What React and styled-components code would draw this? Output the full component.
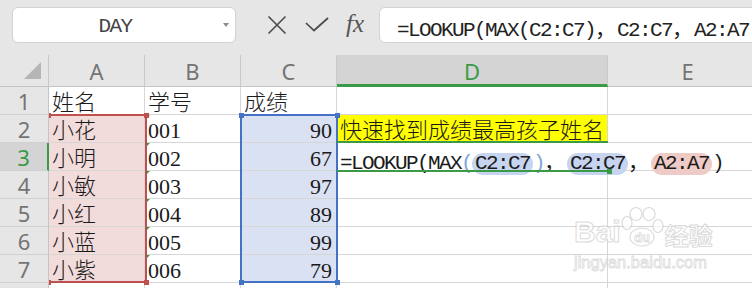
import styled, { createGlobalStyle } from "styled-components";

const GlobalStyle = createGlobalStyle`
  html, body {
    margin: 0;
    padding: 0;
    background: #fff;
    overflow: hidden;
  }
`;

const green = "#3a9a45";
const serif = `"Liberation Serif", "Noto Sans CJK SC", serif`;
const mono = `"Liberation Mono", "Courier New", "DejaVu Sans Mono", monospace`;

const Window = styled.div`
  position: relative;
  width: 752px;
  height: 288px;
  overflow: hidden;
  background: #fff;
`;

const Toolbar = styled.div`
  display: flex;
  align-items: flex-start;
  height: 55px;
  padding-top: 7px;
  box-sizing: border-box;
  background: #e6e6e6;
`;

const NameBox = styled.div`
  display: flex;
  align-items: flex-start;
  flex: none;
  margin-left: 12px;
  width: 224px;
  height: 36px;
  box-sizing: border-box;
  background: #fff;
  border: 1px solid #d3d3d3;
  border-radius: 6px;
`;

const NameText = styled.div`
  flex: 1;
  text-align: center;
  padding-top: 4px;
  line-height: 30px;
  font-family: ${mono};
  font-size: 21px;
  letter-spacing: -1.6px;
  color: #444;
`;

const DropArrow = styled.div`
  flex: none;
  width: 0;
  height: 0;
  margin: 15px 6px 0 6px;
  border-left: 3.5px solid transparent;
  border-right: 3.5px solid transparent;
  border-top: 4px solid #8c8c8c;
`;

const IconRow = styled.div`
  display: flex;
  flex: none;
  margin-left: 21px;
`;

const IconSlot = styled.div`
  display: flex;
  align-items: center;
  justify-content: center;
  width: 40px;
  height: 36px;
  color: #4a4a4a;
`;

const FxText = styled.span`
  font-family: "Liberation Serif", serif;
  font-style: italic;
  font-size: 25px;
  color: #555;
  margin-right: 4px;
  margin-top: -2px;
`;

const FormulaBox = styled.div`
  flex: none;
  margin-left: 2px;
  width: 420px;
  height: 36px;
  box-sizing: border-box;
  padding: 4px 0 0 17px;
  background: #fff;
  border: 1px solid #d3d3d3;
  border-radius: 6px;
  line-height: 30px;
  white-space: nowrap;
  font-family: ${mono};
  font-size: 21px;
  letter-spacing: -1.6px;
  color: #222;
`;

const FullComma = styled.span`
  display: inline-block;
  width: ${(p) => p.$w || 22}px;
  letter-spacing: 0;
  font-family: "Noto Sans CJK SC", sans-serif;
`;

const columns = "49px 96px 96px 96px 271px 160px";
const rowsTpl = "32px repeat(8, 28px)";

const Sheet = styled.div`
  position: relative;
  display: grid;
  grid-template-columns: ${columns};
  grid-template-rows: ${rowsTpl};
`;

const Corner = styled.div`
  display: flex;
  align-items: flex-end;
  justify-content: flex-end;
  padding: 0 7px 7px 0;
  box-sizing: border-box;
  background: #e6e6e6;
  border-right: 1px solid #c9c9c9;
  border-bottom: 1px solid #c4c4c4;
`;

const ColHead = styled.div`
  display: flex;
  align-items: center;
  justify-content: center;
  box-sizing: border-box;
  background: ${(p) => (p.$active ? "#d4d4d4" : "#e6e6e6")};
  border-right: 1px solid #c9c9c9;
  border-bottom: ${(p) => (p.$active ? `3px solid ${green}` : "1px solid #c4c4c4")};
  padding-top: ${(p) => (p.$active ? "2px" : "0")};
  font-family: "Noto Sans", sans-serif;
  font-size: 22px;
  color: ${(p) => (p.$active ? green : "#747474")};
`;

const RowHead = styled.div`
  position: relative;
  z-index: 3;
  display: flex;
  align-items: center;
  justify-content: center;
  box-sizing: border-box;
  background: ${(p) => (p.$active ? "#d4d4d4" : "#e6e6e6")};
  border-right: ${(p) => (p.$active ? `2px solid ${green}` : "1px solid #c4c4c4")};
  border-bottom: 1px solid #d0d0d0;
  font-family: "Noto Sans", sans-serif;
  font-size: 22px;
  color: ${(p) => (p.$active ? green : "#747474")};
`;

const toneBg = {
  red: "#f2dcdb",
  blue: "#dae1f3",
  yellow: "#ffff00",
};

const Cell = styled.div`
  position: relative;
  box-sizing: border-box;
  padding: 4px 4px 0 3px;
  line-height: 24px;
  white-space: nowrap;
  text-align: ${(p) => (p.$right ? "right" : "left")};
  background: ${(p) => toneBg[p.$tone] || "transparent"};
  border-right: ${(p) => (p.$open ? "none" : "1px solid #d6d6d6")};
  border-bottom: 1px solid #d6d6d6;
  font-family: ${serif};
  font-size: 22px;
  font-weight: 300;
  color: #1a1a1a;
  z-index: ${(p) => (p.$open ? 1 : "auto")};

  ${(p) =>
    p.$marker &&
    `
    &::before {
      content: "";
      position: absolute;
      top: 0;
      left: 1px;
      border-top: 4px solid ${green};
      border-right: 4px solid transparent;
    }
  `}
`;

const FormulaLine = styled.span`
  font-family: ${mono};
  font-size: 21px;
  font-weight: 400;
  letter-spacing: -1.6px;
  color: #1a1a1a;
  position: relative;
  top: 1px;
`;

const Paren = styled.span`
  color: #7ea4d8;
`;

const Ref = styled.span`
  display: inline-block;
  height: 22px;
  line-height: 22px;
  padding: 0 3px;
  border-radius: 11px;
  background: ${(p) => (p.$tone === "red" ? "#efcbc7" : "#c7d4ef")};
`;

const SelectionLayer = styled.div`
  position: absolute;
  inset: 0;
  z-index: 2;
  display: grid;
  grid-template-columns: ${columns};
  grid-template-rows: ${rowsTpl};
  pointer-events: none;
`;

const Frame = styled.div`
  position: relative;
  grid-column: ${(p) => p.$col};
  grid-row: ${(p) => p.$rows};
  margin: ${(p) => p.$margin};
  border: 2px solid ${(p) => p.$color};
`;

const ActiveFrame = styled.div`
  position: relative;
  grid-column: 5;
  grid-row: 4;
  margin: -2px 0 -1px 0;
  border-top: 2px solid ${green};
  border-bottom: 2px solid ${green};
`;

const Handle = styled.div`
  position: absolute;
  width: 5px;
  height: 5px;
  background: ${(p) => p.$color};
  ${(p) => (p.$top ? "top: -3.5px;" : "bottom: -3.5px;")}
  ${(p) => (p.$left ? "left: -3.5px;" : "right: -3.5px;")}
`;

const Watermark = styled.div`
  position: absolute;
  left: 574px;
  top: 204px;
  z-index: 5;
  pointer-events: none;
  opacity: 0.75;
`;

const MarkRow = styled.div`
  display: flex;
  align-items: flex-end;
  height: 44px;
`;

const MarkText = styled.span`
  font-family: ${(p) => (p.$cjk ? `"Noto Sans CJK SC", sans-serif` : `"Liberation Sans", sans-serif`)};
  font-weight: 700;
  font-size: ${(p) => p.$size}px;
  line-height: 1;
  color: #fff;
  -webkit-text-stroke: 1px #cfcfcf;
  margin-bottom: 1px;
`;

const MarkDomain = styled.div`
  margin-top: 6px;
  font-family: "Liberation Sans", sans-serif;
  font-size: 16.5px;
  line-height: 1;
  color: #fff;
  -webkit-text-stroke: 0.8px #cfcfcf;
`;

const data = [
  ["姓名", "学号", "成绩"],
  ["小花", "001", "90"],
  ["小明", "002", "67"],
  ["小敏", "003", "97"],
  ["小红", "004", "89"],
  ["小蓝", "005", "99"],
  ["小紫", "006", "79"],
  ["", "", ""],
];

const CloseIcon = () => (
  <svg width="20" height="20" viewBox="0 0 20 20">
    <path d="M1.5 1.5 L18.5 18.5 M18.5 1.5 L1.5 18.5" stroke="#4a4a4a" strokeWidth="1.6" fill="none" />
  </svg>
);

const CheckIcon = () => (
  <svg width="24" height="16" viewBox="0 0 24 16">
    <path d="M1 6 L9 13.5 L23 1" stroke="#4a4a4a" strokeWidth="1.7" fill="none" />
  </svg>
);

const CornerTriangle = () => (
  <svg width="17" height="17" viewBox="0 0 17 17">
    <path d="M17 0 L17 17 L0 17 Z" fill="#b5b5b5" />
  </svg>
);

const Paw = () => (
  <svg width="44" height="42" viewBox="0 0 44 42">
    <g fill="#fff" stroke="#cfcfcf" strokeWidth="1.2">
      <ellipse cx="6" cy="17" rx="5" ry="6.5" />
      <ellipse cx="15" cy="8" rx="6" ry="6.5" />
      <ellipse cx="28" cy="8" rx="6" ry="6.5" />
      <ellipse cx="37" cy="20" rx="5" ry="6.5" />
      <ellipse cx="21" cy="31" rx="12" ry="9" />
    </g>
    <text x="21" y="36" textAnchor="middle" fontFamily="Liberation Sans, sans-serif" fontWeight="700" fontSize="13" fill="#fff" stroke="#cfcfcf" strokeWidth="0.8">
      du
    </text>
  </svg>
);

const App = () => {
  return (
    <Window>
      <GlobalStyle />
      <Toolbar>
        <NameBox>
          <NameText>DAY</NameText>
          <DropArrow />
        </NameBox>
        <IconRow>
          <IconSlot>
            <CloseIcon />
          </IconSlot>
          <IconSlot>
            <CheckIcon />
          </IconSlot>
          <IconSlot>
            <FxText>fx</FxText>
          </IconSlot>
        </IconRow>
        <FormulaBox>
          =LOOKUP(MAX(C2:C7)<FullComma>，</FullComma>C2:C7<FullComma>，</FullComma>A2:A7)
        </FormulaBox>
      </Toolbar>

      <Sheet>
        <Corner>
          <CornerTriangle />
        </Corner>
        {["A", "B", "C", "D", "E"].map((c) => (
          <ColHead key={c} $active={c === "D"}>
            {c}
          </ColHead>
        ))}

        {data.map((row, i) => {
          const n = i + 1;
          const inSel = n >= 2 && n <= 7;
          return [
            <RowHead key={`h${n}`} $active={n === 3}>
              {n < 8 ? n : ""}
            </RowHead>,
            <Cell key={`a${n}`} $tone={inSel ? "red" : undefined}>
              {row[0]}
            </Cell>,
            <Cell key={`b${n}`} $marker={inSel}>
              {row[1]}
            </Cell>,
            <Cell key={`c${n}`} $tone={inSel ? "blue" : undefined} $right={n !== 1}>
              {row[2]}
            </Cell>,
            n === 2 ? (
              <Cell key={`d${n}`} $tone="yellow">
                快速找到成绩最高孩子姓名
              </Cell>
            ) : n === 3 ? (
              <Cell key={`d${n}`} $open>
                <FormulaLine>
                  =LOOKUP(MAX<Paren>(</Paren>
                  <Ref>C2:C7</Ref>
                  <Paren>)</Paren>
                  <FullComma $w={23}>，</FullComma>
                  <Ref>C2:C7</Ref>
                  <FullComma $w={23}>，</FullComma>
                  <Ref $tone="red">A2:A7</Ref>)
                </FormulaLine>
              </Cell>
            ) : (
              <Cell key={`d${n}`} />
            ),
            <Cell key={`e${n}`} />,
          ];
        })}

        <SelectionLayer>
          <Frame $col="2" $rows="3 / 9" $margin="-1px -2px 0 -2px" $color="#c0504d">
            <Handle $color="#c0504d" $top $left />
            <Handle $color="#c0504d" $top />
            <Handle $color="#c0504d" $left />
            <Handle $color="#c0504d" />
          </Frame>
          <Frame $col="4" $rows="3 / 9" $margin="-1px -1px 0 -1px" $color="#4472c4">
            <Handle $color="#4472c4" $top $left />
            <Handle $color="#4472c4" $top />
            <Handle $color="#4472c4" $left />
            <Handle $color="#4472c4" />
          </Frame>
          <ActiveFrame>
            <Handle $color={green} />
          </ActiveFrame>
        </SelectionLayer>
      </Sheet>

      <Watermark>
        <MarkRow>
          <MarkText $size={30}>Bai</MarkText>
          <Paw />
          <MarkText $cjk $size={24}>
            经验
          </MarkText>
        </MarkRow>
        <MarkDomain>jingyan.baidu.com</MarkDomain>
      </Watermark>
    </Window>
  );
};

export default App;
